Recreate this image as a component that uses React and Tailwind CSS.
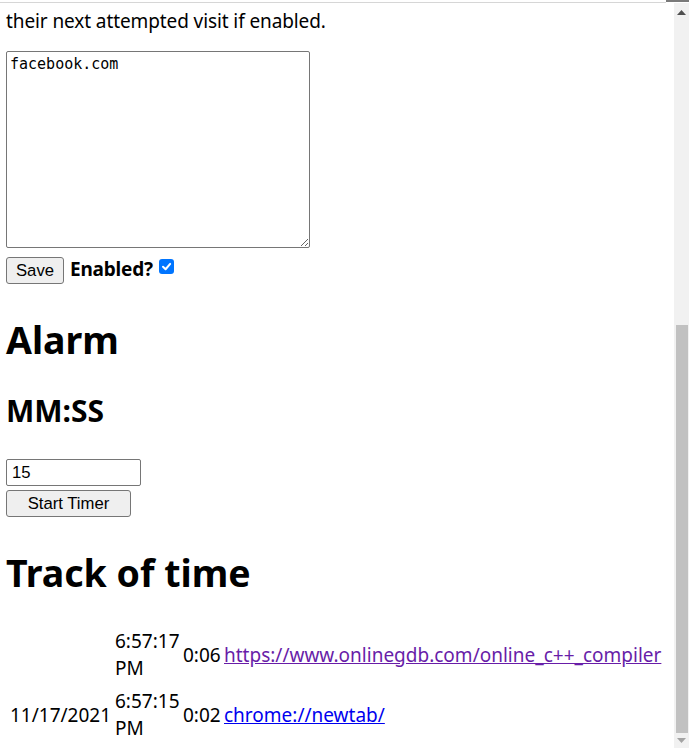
import React from "react";

const sans = "font-['Noto_Sans','Open_Sans',sans-serif]";
const arial = "font-['Liberation_Sans',Arial,sans-serif]";

function Checkbox() {
  return (
    <span className="mt-[2px] inline-flex h-[15px] w-[15px] items-center justify-center rounded-[3px] bg-[#0075ff]">
      <svg width="11" height="11" viewBox="0 0 12 12" fill="none">
        <path d="M2.2 6.3 L5 9 L10 3.2" stroke="white" strokeWidth="2.2" strokeLinecap="round" strokeLinejoin="round" />
      </svg>
    </span>
  );
}

export default function App() {
  return (
    <div className={`flex h-[748px] w-[689px] flex-col overflow-hidden bg-white text-black ${sans}`}>
      <div className="flex h-[3px] shrink-0">
        <div className="h-[3px] flex-1 border-b border-[#d6d6d6]" />
        <div className="h-[2px] w-[23px] bg-[#7a7a7a]" />
      </div>
      <div className="flex min-h-0 flex-1">
        <main className="min-w-0 flex-1 pl-[6px]">
          <p className="mt-[5px] text-[19px] leading-[27px] tracking-[-0.1px]">their next attempted visit if enabled.</p>

          <textarea
            defaultValue="facebook.com"
            className="mt-[16px] block h-[197px] w-[304px] rounded-[2px] border border-[#767676] px-[3px] py-[2px] font-['DejaVu_Sans_Mono',monospace] text-[15px] leading-[20px]"
          />

          <div className="mt-[9px] flex items-start gap-[6px]">
            <button className={`h-[27px] w-[58px] rounded-[3px] border border-[#767676] bg-[#efefef] text-[16.7px] ${arial}`}>
              Save
            </button>
            <span className="-mt-[1px] text-[19px] font-bold leading-[27px] tracking-[-0.2px]">Enabled?</span>
            <Checkbox />
          </div>

          <h1 className="mt-[32px] text-[37.5px] font-bold leading-[48px]">Alarm</h1>
          <h2 className="mt-[29px] text-[30px] font-bold leading-[36px]">MM:SS</h2>

          <input
            defaultValue="15"
            className={`mt-[30px] block h-[27px] w-[135px] rounded-[2px] border border-[#767676] px-[5px] text-[16.7px] ${arial}`}
          />
          <button className={`mt-[4px] block h-[27px] w-[125px] rounded-[3px] border border-[#767676] bg-[#efefef] text-[16.7px] ${arial}`}>
            Start Timer
          </button>

          <h1 className="mt-[32px] text-[37.5px] font-bold leading-[48px]">Track of time</h1>

          <div className="mt-[31px] grid grid-cols-[100px_63px_36px_1fr] gap-x-[5px] gap-y-[6px] pl-[4px] text-[19px] leading-[27px]">
            <div />
            <div>6:57:17<br />PM</div>
            <div className="self-center">0:06</div>
            <div className="self-center">
              <a href="#" className="whitespace-nowrap text-[#681da8] underline">https://www.onlinegdb.com/online_c++_compiler</a>
            </div>
            <div className="self-center">11/17/2021</div>
            <div>6:57:15<br />PM</div>
            <div className="self-center">0:02</div>
            <div className="self-center">
              <a href="#" className="whitespace-nowrap text-[#0000ee] underline">chrome://newtab/</a>
            </div>
          </div>
        </main>

        <div className="flex w-[15px] shrink-0 flex-col bg-[#f1f1f1]">
          <div className="flex h-[17px] items-center justify-center pt-[2px]">
            <svg width="9" height="5" viewBox="0 0 9 5"><path d="M0 5 L4.5 0 L9 5 Z" fill="#505050" /></svg>
          </div>
          <div className="h-[305px]" />
          <div className="ml-[2px] mr-[1px] h-[408px] bg-[#c1c1c1]" />
          <div className="flex flex-1 items-center justify-center">
            <svg width="9" height="5" viewBox="0 0 9 5"><path d="M0 0 L9 0 L4.5 5 Z" fill="#a3a3a3" /></svg>
          </div>
        </div>
      </div>
    </div>
  );
}
